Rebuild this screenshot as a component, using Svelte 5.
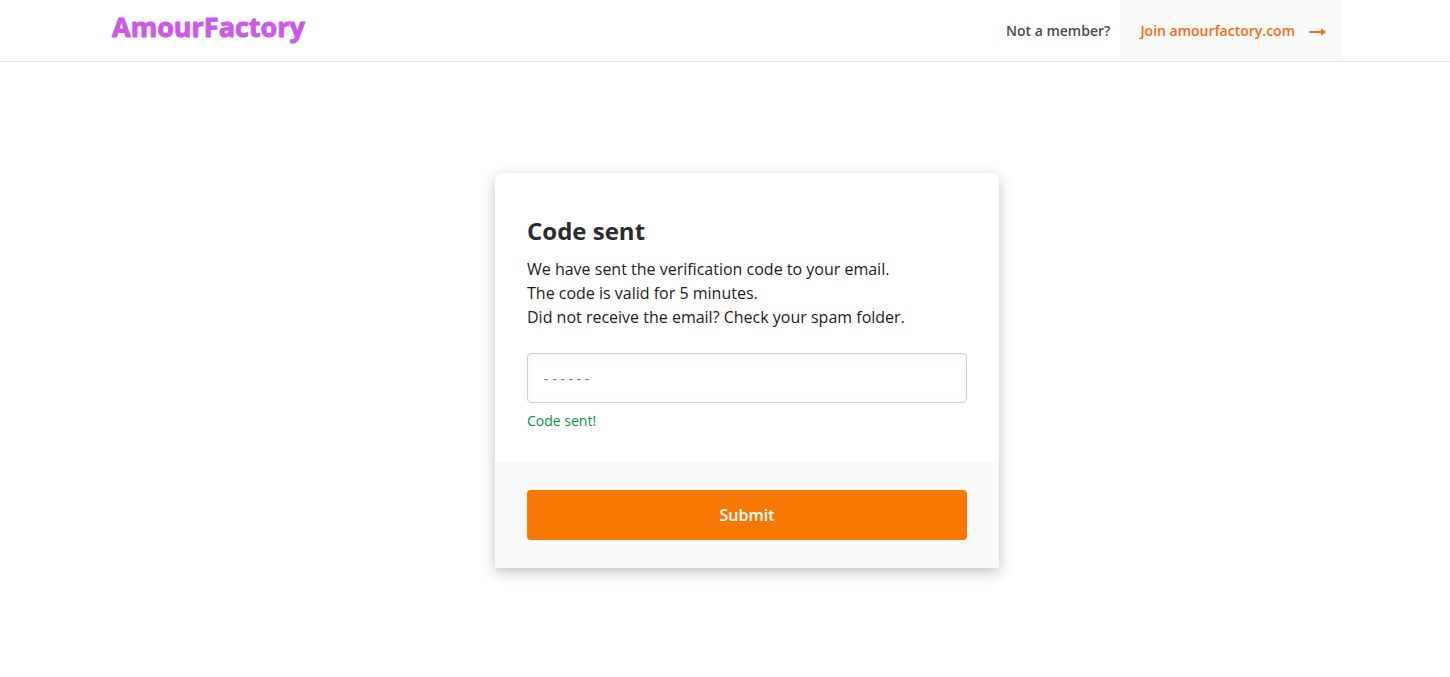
<script lang="ts">
  /** Six digit code typed by the user */
  let code = $state('');
  /** Status line under the code field */
  let message = $state('Code sent!');

  const lines = [
    'We have sent the verification code to your email.',
    'The code is valid for 5 minutes.',
    'Did not receive the email? Check your spam folder.',
  ];

  function handleSubmit(event: SubmitEvent) {
    event.preventDefault();
    if (code.trim().length === 6) {
      message = '';
    }
  }
</script>

<header class="header">
  <a class="logo" href="/" aria-label="AmourFactory">
    <svg viewBox="0 0 220 52">
      <text x="1" y="37">AmourFactory</text>
    </svg>
  </a>
  <div class="join">
    <span class="join-label">Not a member?</span>
    <a class="join-link" href="/register">
      Join amourfactory.com
      <svg class="arrow" viewBox="0 0 18 10" aria-hidden="true">
        <path d="M1 6h13" fill="none" stroke="currentColor" stroke-width="2" stroke-linecap="round" />
        <path d="M12 2.2 17 6l-5 3.8z" fill="currentColor" />
      </svg>
    </a>
  </div>
</header>

<main class="content">
  <form class="card" onsubmit={handleSubmit}>
    <div class="card-body">
      <h1>Code sent</h1>
      <label class="description" for="code">
        {#each lines as line}
          <span>{line}</span>
        {/each}
      </label>
      <input
        id="code"
        class="code-input"
        type="text"
        inputmode="numeric"
        autocomplete="one-time-code"
        maxlength="6"
        placeholder="- - - - - -"
        bind:value={code}
      />
      <p class="message" role="status">{message}</p>
    </div>
    <div class="card-footer">
      <button class="submit" type="submit">Submit</button>
    </div>
  </form>
</main>

<style>
  :global(body) {
    background: #fff;
    color: #1b1b1b;
    font-family: 'Open Sans', 'Noto Sans', sans-serif;
    font-size: 16px;
    line-height: 24px;
  }

  .header {
    display: flex;
    justify-content: space-between;
    height: 61px;
    padding: 0 107px 0 111px;
    border-bottom: 1px solid #e1e1e1;
  }

  .logo svg {
    display: block;
    width: 220px;
    height: 52px;
    overflow: visible;
  }

  .logo text {
    fill: #cc5ae8;
    stroke: #cc5ae8;
    stroke-width: 1px;
    stroke-linejoin: round;
    font-family: 'Open Sans', 'Noto Sans', sans-serif;
    font-size: 27px;
    font-weight: 700;
  }

  .join {
    display: flex;
    align-items: stretch;
    font-size: 14px;
    font-weight: 600;
    line-height: 61px;
  }

  .join-label {
    padding-right: 10px;
    color: #4a4a4a;
  }

  .join-link {
    display: flex;
    align-items: center;
    gap: 14px;
    padding: 0 16px 0 20px;
    background: #fafafa;
    color: #f96a0b;
    text-decoration: none;
  }

  .arrow {
    width: 18px;
    height: 10px;
  }

  .content {
    display: flex;
    justify-content: center;
    padding: 111px 0 48px 44px;
  }

  .card {
    width: 100%;
    max-width: 504px;
    border-radius: 8px 8px 0 0;
    background: #fff;
    box-shadow: 0 4px 14px rgba(0, 0, 0, 0.25);
  }

  .card-body {
    padding: 40px 32px 31px;
  }

  h1 {
    margin: 0 0 8px;
    color: #2b2b2b;
    font-size: 24px;
    font-weight: 700;
    line-height: 36px;
  }

  .description span {
    display: block;
  }

  .code-input {
    box-sizing: border-box;
    display: block;
    width: 100%;
    height: 50px;
    margin-top: 24px;
    padding: 0 16px;
    border: 1px solid #ccc;
    border-radius: 4px;
    background: #fff;
    box-shadow: inset 0 2px 8px rgba(0, 0, 0, 0.04);
    color: #1b1b1b;
    font: inherit;
    font-size: 14px;
  }

  .code-input::placeholder {
    color: #757575;
    opacity: 1;
  }

  .message {
    min-height: 20px;
    margin: 8px 0 0;
    color: #00993a;
    font-size: 14px;
    line-height: 20px;
  }

  .card-footer {
    padding: 28px 32px;
    background: #fafafa;
  }

  .submit {
    width: 100%;
    height: 50px;
    border: none;
    border-radius: 4px;
    background: #f87805;
    color: #fff;
    font: inherit;
    font-weight: 600;
    cursor: pointer;
  }

  .submit:hover {
    background: #e96e00;
  }
</style>
